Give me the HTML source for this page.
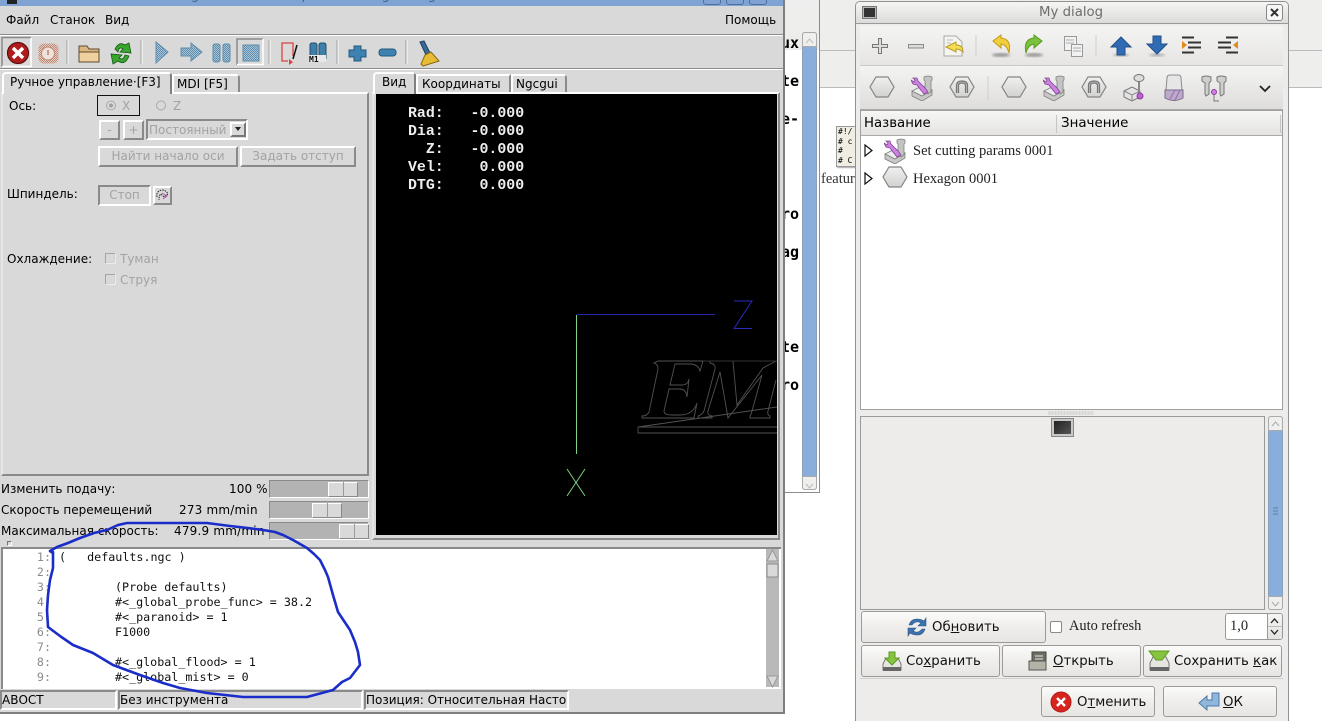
<!DOCTYPE html>
<html><head><meta charset="utf-8"><style>
html,body{margin:0;padding:0}
body{width:1322px;height:721px;overflow:hidden;position:relative;background:#fff;font-family:"DejaVu Sans","Liberation Sans",sans-serif;font-size:12px;color:#000}
div,span.t,a{position:absolute;box-sizing:border-box}
.t{position:absolute;white-space:pre;line-height:14px}
.dis{color:#a3a3a3}
.bv{background:#d9d9d9;border:2px solid;border-color:#fff #8a8a8a #8a8a8a #fff}
.sn{background:#d9d9d9;border:2px solid;border-color:#8a8a8a #fff #fff #8a8a8a}
.qb{background:linear-gradient(#fbfbfa,#f0efed 45%,#e6e5e2);border:1px solid #9b9a97;border-radius:3px;font-size:13.3px;color:#111}
.qb span{position:absolute;white-space:pre;line-height:16px}
.sl{background:#b3b3b3;border:1px solid;border-color:#8a8a8a #fff #fff #8a8a8a;height:18px}
.th{position:absolute;top:1px;height:15px;background:#d9d9d9;border:1px solid;border-color:#fff #888 #888 #fff}
.ln{position:absolute;left:0;width:51px;text-align:right;font:11.7px/15px "DejaVu Sans Mono",monospace;color:#8c8c8c}
.cd{position:absolute;white-space:pre;font:11.7px/15px "DejaVu Sans Mono",monospace;color:#111}
.ro{position:absolute;left:408px;white-space:pre;font:bold 14.9px/18px "Liberation Mono",monospace;color:#eee}
.st{position:absolute;top:690px;height:20px;background:#d9d9d9;border:2px solid;border-color:#8a8a8a #fff #fff #8a8a8a;white-space:pre;line-height:17px;padding-left:0;overflow:hidden}
.bg{position:absolute;white-space:pre;font:bold 15px/16px 'DejaVu Sans Mono',monospace}
u{text-underline-offset:1px}
</style></head><body>

<svg width="0" height="0" style="position:absolute"><defs>
<linearGradient id="hx" x1="0" y1="0" x2="0" y2="1"><stop offset="0" stop-color="#f0f0ef"/><stop offset="1" stop-color="#d2d2d0"/></linearGradient>
<pattern id="stb" width="2" height="2" patternUnits="userSpaceOnUse"><rect width="2" height="2" fill="#a9c5d8"/><rect width="1" height="1" fill="#5d8cae"/><rect x="1" y="1" width="1" height="1" fill="#5d8cae"/></pattern>
<pattern id="str" width="2" height="2" patternUnits="userSpaceOnUse"><rect width="2" height="2" fill="#e4cfc6"/><rect width="1" height="1" fill="#c08872"/><rect x="1" y="1" width="1" height="1" fill="#c08872"/></pattern>
<symbol id="hex" viewBox="0 0 26 22"><path d="M7 1H19L25 11 19 21H7L1 11Z" fill="url(#hx)" stroke="#858585" stroke-width="1.200"/></symbol>
<symbol id="hexn" viewBox="0 0 26 22"><path d="M7 1H19L25 11 19 21H7L1 11Z" fill="url(#hx)" stroke="#858585" stroke-width="1.200"/><path d="M8.500 17V9.500Q8.500 6 13 6T17.500 9.500V17" fill="none" stroke="#777" stroke-width="3.200"/><path d="M8.500 17V9.500Q8.500 6 13 6T17.500 9.500V17" fill="none" stroke="#bdbdbd" stroke-width=".8"/></symbol>
<symbol id="cut" viewBox="0 0 22 26">
<path d="M1 16L11 21 21 15V20L11 26 1 21Z" fill="#c8c8c8" stroke="#808080" stroke-width=".8"/><path d="M1 16L11 11 21 15 11 21Z" fill="#ececec" stroke="#808080" stroke-width=".8"/>
<path d="M13 2Q17 0 21 2V5L20 6V17L17 19 14 17V6L13 5Z" fill="#c4c4c4" stroke="#808080" stroke-width=".8"/>
<path d="M2 3L6 3 7 6 14 13 17 17 13 19 9 14 6 10 2 9 0 5 3 7 4 5Z" fill="#d07fe4" stroke="#7d4a8d" stroke-width=".8"/></symbol>
<symbol id="doc" viewBox="0 0 22 22"><path d="M2 1H14L20 7V21H2Z" fill="#f4f4f0" stroke="#aaa"/><path d="M5 5H11M5 8H9" stroke="#bbb"/><path d="M21 17Q21 10 14 10V7L4 12 14 17V14Q18 14 21 17Z" fill="#f4dc55" stroke="#b89a20"/></symbol>
<filter id="bl"><feGaussianBlur stdDeviation="1.200"/></filter>
</defs></svg>

<!-- background windows -->
<div style="left:785px;top:0;width:35px;height:493px;background:#fff;border-right:1px solid #8c8c8c;border-bottom:1px solid #8c8c8c"></div>
<div style="left:785px;top:0;width:34px;height:50px;background:linear-gradient(#eee,#ededeb)"></div>
<div style="left:802px;top:32px;width:15px;height:458px;background:#89aedb;border:1px solid #8aa0bd;border-radius:3px"></div>
<div style="left:802px;top:32px;width:15px;height:15px;background:#efefee;border:1px solid #aaa;border-radius:3px 3px 0 0"></div>
<div style="left:802px;top:476px;width:15px;height:14px;background:#efefee;border:1px solid #aaa;border-radius:0 0 3px 3px"></div>
<svg style="position:absolute;left:802px;top:32px" width="15" height="460"><path d="M4 11L7.500 7 11 11M4 452L7.500 456 11 452" fill="none" stroke="#bbb"/></svg>
<span class="bg" style="left:781px;top:35px">ux</span>
<span class="bg" style="left:781px;top:73px">te</span>
<span class="bg" style="left:781px;top:111px">e-</span>
<span class="bg" style="left:781px;top:206px">ro</span>
<span class="bg" style="left:781px;top:244px">ag</span>
<span class="bg" style="left:781px;top:339px">te</span>
<span class="bg" style="left:781px;top:377px">ro</span>
<div style="left:820px;top:0;width:502px;height:88px;background:#eeeeec;border-bottom:1px solid #bbb"></div>
<div style="left:820px;top:50px;width:502px;height:1px;background:#bbb"></div>
<div style="left:836px;top:126px;width:24px;height:41px;background:#f0eee2;border:1px solid #999;box-shadow:1px 1px 1px #aaa;overflow:hidden;font:8px/9.500px 'DejaVu Sans Mono',monospace;padding-left:1px;white-space:pre">#!/
# c
#
# C</div>
<span class="t" style="left:821px;top:171px;font:14.500px/16px 'Liberation Serif',serif;color:#333">featur</span>

<!-- left window -->
<div style="left:0;top:0;width:785px;height:714px;background:#d9d9d9;border-right:2px solid #7f7f7f;border-bottom:2px solid #7f7f7f"></div>
<div style="left:0;top:0;width:783px;height:6px;background:#7fa3d3;overflow:hidden">
<span class="t" style="left:125px;top:-11px;font-size:13px;color:#44648f;letter-spacing:.4px">featurecnge - Axis 2.5.0~pre - Probe gcode generator - Hu NCGUI - 1.1</span>
<div style="left:703px;top:-8px;width:18px;height:13px;border:1px solid #4f6f9c;border-radius:3px"></div>
<div style="left:726px;top:-8px;width:18px;height:13px;border:1px solid #4f6f9c;border-radius:3px"></div>
<div style="left:749px;top:-8px;width:18px;height:13px;border:1px solid #4f6f9c;border-radius:3px"></div>
<div style="left:7px;top:0;width:10px;height:4px;background:#222"></div>
</div>
<span class="t" style="left:6px;top:13px">Файл</span>
<span class="t" style="left:50px;top:13px">Станок</span>
<span class="t" style="left:105px;top:13px">Вид</span>
<span class="t" style="left:725px;top:13px">Помощь</span>
<div style="left:0;top:34px;width:783px;height:2px;background:#8c8c8c;border-bottom:1px solid #fff"></div>
<div style="left:0;top:68px;width:783px;height:2px;background:#8c8c8c;border-bottom:1px solid #fff"></div>

<!-- toolbar -->
<svg style="position:absolute;left:0;top:36px" width="460" height="33" viewBox="0 36 460 33">
<path d="M2 67V37.500H31" fill="none" stroke="#8a8a8a" stroke-width="1.500"/><path d="M2 66.500H31V38" fill="none" stroke="#fff" stroke-width="1.500"/>
<path d="M237 65V39H263" fill="none" stroke="#8a8a8a" stroke-width="1.500"/><path d="M237 64.500H263V39" fill="none" stroke="#fff" stroke-width="1.500"/>
<path d="M67 40V64M141 40V64M269 40V64M337 40V64M406 40V64" stroke="#9c9c9c" stroke-width="1"/><path d="M68 40V64M142 40V64M270 40V64M338 40V64M407 40V64" stroke="#fff" stroke-width="1"/>
<circle cx="18" cy="53" r="10.500" fill="#b01c1c" stroke="#5e0e0e" stroke-width="1.200"/><path d="M13 48L23 58M23 48L13 58" stroke="#fff" stroke-width="3.400"/>
<rect x="38.500" y="43.500" width="20" height="20" rx="5" fill="url(#str)"/><circle cx="48" cy="53.500" r="6.500" fill="#efe2dc" stroke="#bb8a78"/><path d="M48 50V55" stroke="#b98472" stroke-width="1.500"/>
<path d="M79 46H87L89 49H99V62H79Z" fill="#dcb67e" stroke="#5c4a2e"/><path d="M79 52H99V62H79Z" fill="#efd09e" stroke="#5c4a2e"/>
<path d="M115 49Q119 41 125 45L129 43 131 53 120 52 123 49Q119 46 118 52Z" fill="#3aa52e" stroke="#155a15" stroke-width=".8"/><path d="M129 56Q125 66 118 61L113 64 111 54 122 55 119 58Q123 61 125 55Z" fill="#3aa52e" stroke="#155a15" stroke-width=".8"/>
<path d="M156 42L168 52 156 63Z" fill="url(#stb)" stroke="#5f8dac"/>
<path d="M181 48H191V43L202 52 191 61V56H181Z" fill="url(#stb)" stroke="#5f8dac"/>
<rect x="213" y="44" width="7" height="18" rx="2" fill="url(#stb)" stroke="#5f8dac"/><rect x="223" y="44" width="7" height="18" rx="2" fill="url(#stb)" stroke="#5f8dac"/>
<rect x="243" y="45" width="16" height="16" fill="url(#stb)" stroke="#5f8dac"/>
<path d="M288 61H282V43H293V56" fill="none" stroke="#e04040" stroke-width="1.300"/><path d="M285 62H289V59L293 62 289 65V62" fill="#e04040"/><path d="M293 59L297 45" stroke="#111" stroke-width="1.500"/>
<rect x="310" y="43" width="7" height="17" rx="2" fill="#3e7fa8" stroke="#1e4f70"/><rect x="319" y="43" width="7" height="17" rx="2" fill="#3e7fa8" stroke="#1e4f70"/>
<rect x="309" y="55" width="17" height="7" fill="#e8e8e8"/>
<path d="M354 46H361V50H366V57H361V61H354V57H349V50H354Z" fill="#3e82b2" stroke="#215a80"/>
<rect x="379" y="49" width="17" height="7" rx="3" fill="#3e82b2" stroke="#215a80"/>
<path d="M420 42L424 41 430 53 426 55Z" fill="#3a6a9a" stroke="#1e3e60"/><path d="M425 55L431 52 439 61 423 66 421 64Z" fill="#e8bb35" stroke="#8a6a10"/>
</svg>
<span class="t" style="left:309px;top:56px;font:bold 8px/8px 'DejaVu Sans Mono',monospace;color:#111">M1</span>

<!-- tabs -->
<div style="left:1px;top:92px;width:368px;height:384px;background:#d9d9d9;border:2px solid;border-color:#fff #8a8a8a #8a8a8a #e6e6e6"></div>
<div style="left:2px;top:72px;width:170px;height:22px;background:#d9d9d9;border:2px solid;border-color:#fff #7f7f7f transparent #fff;border-bottom:0;border-radius:4px 4px 0 0"></div>
<div style="left:172px;top:74px;width:68px;height:18px;background:#d9d9d9;border:2px solid;border-color:#fff #8a8a8a transparent #fff;border-bottom:0;border-radius:0 4px 0 0"></div>
<span class="t" style="left:10px;top:75px">Ручное управление·[F3]</span>
<span class="t" style="left:177px;top:77px">MDI [F5]</span>

<span class="t" style="left:9px;top:99px">Ось:</span>
<div style="left:97px;top:95px;width:43px;height:21px;border:1px solid #111"></div>
<svg style="position:absolute;left:104px;top:99px" width="70" height="14"><circle cx="7" cy="6.500" r="4.500" fill="none" stroke="#a9a9a9"/><circle cx="7" cy="6.500" r="2" fill="#a0a0a0"/><circle cx="57" cy="6.500" r="4.500" fill="none" stroke="#a9a9a9"/></svg>
<span class="t dis" style="left:122px;top:99px">X</span>
<span class="t dis" style="left:173px;top:99px">Z</span>

<div class="bv dis" style="left:99px;top:120px;width:21px;height:20px;text-align:center;line-height:16px">-</div>
<div class="bv dis" style="left:123px;top:120px;width:21px;height:20px;text-align:center;line-height:16px">+</div>
<div class="sn" style="left:146px;top:119px;width:102px;height:21px"></div>
<span class="t dis" style="left:149px;top:123px">Постоянный</span>
<div class="bv" style="left:230px;top:122px;width:16px;height:15px;border-color:#fff #777 #777 #fff"></div>
<svg style="position:absolute;left:234px;top:126px" width="9" height="7"><path d="M1 1H7L4 5Z" fill="#222"/></svg>
<div class="bv dis" style="left:98px;top:146px;width:140px;height:21px;text-align:center;line-height:17px">Найти начало оси</div>
<div class="bv dis" style="left:240px;top:146px;width:116px;height:21px;text-align:center;line-height:17px">Задать отступ</div>

<span class="t" style="left:7px;top:187px">Шпиндель:</span>
<div class="sn dis" style="left:98px;top:185px;width:53px;height:21px;text-align:center;line-height:17px">Стоп</div>
<div class="bv" style="left:153px;top:186px;width:19px;height:19px"></div>
<svg style="position:absolute;left:155px;top:188px" width="15" height="15"><path d="M2 9Q1 3 7 2 11 2 13 6L9 9 6 6Q4 7 4 12" fill="none" stroke="#222" stroke-dasharray="1.500 1"/><path d="M7 5L12 8 8 11" fill="none" stroke="#b05ab0"/></svg>

<span class="t" style="left:7px;top:252px">Охлаждение:</span>
<svg style="position:absolute;left:104px;top:252px" width="14" height="36"><rect x="1.500" y="1.500" width="9" height="9" fill="none" stroke="#a5a5a5"/><rect x="1.500" y="22.500" width="9" height="9" fill="none" stroke="#a5a5a5"/><path d="M11 2V11H2M11 23V32H2" fill="none" stroke="#fff"/></svg>
<span class="t dis" style="left:120px;top:252px">Туман</span>
<span class="t dis" style="left:120px;top:273px">Струя</span>

<span class="t" style="left:1px;top:482px">Изменить подачу:</span>
<span class="t" style="left:229px;top:482px;letter-spacing:.1px">100 %</span>
<div class="sl" style="left:269px;top:480px;width:100px"><div class="th" style="left:58px;width:30px"></div><div style="left:73px;top:1px;width:1px;height:15px;background:#999"></div></div>
<span class="t" style="left:1px;top:503px">Скорость перемещений</span>
<span class="t" style="left:179px;top:503px;letter-spacing:.2px">273 mm/min</span>
<div class="sl" style="left:269px;top:501px;width:100px"><div class="th" style="left:42px;width:30px"></div><div style="left:57px;top:1px;width:1px;height:15px;background:#999"></div></div>
<span class="t" style="left:1px;top:524px">Максимальная скорость:</span>
<span class="t" style="left:174px;top:524px;letter-spacing:.2px">479.9 mm/min</span>
<div class="sl" style="left:269px;top:522px;width:100px"><div class="th" style="left:69px;width:30px"></div><div style="left:84px;top:1px;width:1px;height:15px;background:#999"></div></div>
<div style="left:7px;top:541px;width:5px;height:5px;background:#d9d9d9;border:1px solid #777;border-color:#777 #fff #fff #777"></div>

<!-- preview -->
<div style="left:372px;top:92px;width:408px;height:448px;background:#d9d9d9;border:2px solid;border-color:#fff #8a8a8a #8a8a8a #e6e6e6"></div>
<div style="left:373px;top:72px;width:43px;height:22px;background:#d9d9d9;border:2px solid;border-color:#fff #7f7f7f transparent #fff;border-bottom:0;border-radius:4px 4px 0 0"></div>
<div style="left:416px;top:74px;width:95px;height:18px;border:2px solid;border-color:#fff #8a8a8a transparent #fff;border-bottom:0"></div>
<div style="left:511px;top:74px;width:56px;height:18px;border:2px solid;border-color:#fff #8a8a8a transparent #fff;border-bottom:0;border-radius:0 4px 0 0"></div>
<span class="t" style="left:382px;top:75px">Вид</span>
<span class="t" style="left:422px;top:77px">Координаты</span>
<span class="t" style="left:516px;top:77px">Ngcgui</span>
<div style="left:376px;top:94px;width:401px;height:441px;background:#000"></div>
<span class="ro" style="top:104.500px">Rad:   -0.000</span>
<span class="ro" style="top:122.500px">Dia:   -0.000</span>
<span class="ro" style="top:140.500px">  Z:   -0.000</span>
<span class="ro" style="top:158.500px">Vel:    0.000</span>
<span class="ro" style="top:176.500px">DTG:    0.000</span>
<svg style="position:absolute;left:376px;top:94px" width="401" height="441" viewBox="376 94 401 441">
<path d="M576.500 314.500H715" fill="none" stroke="#2424a8"/>
<path d="M734 301H752L734 328.500H752" fill="none" stroke="#2a2abf"/>
<path d="M576.500 315V454M567 469L585 496M585 469L567 496" fill="none" stroke="#7fd07f"/>
<g fill="none" stroke="#525252" stroke-width=".9">
<path d="M658 361H703L700 371Q698 364 690 364H675L670 385H682Q688 385 689 379L687 397Q686 389 680 389H669L664 411Q664 415 672 415H680Q693 415 697 403L694 418H642V416Q647 416 649 412L658 369Q658 364 654 363Z"/>
<path d="M698 418V416Q702 415 704 411L715 369Q716 364 710 363V361H733L737 405 763 368 776 361"/>
<path d="M698 418H712V416Q707 415 708 411L720 372 728 418 762 375 752 411Q751 415 750 416V418H770V416Q767 415 768 411L776 380"/>
<path d="M703 361H777" stroke="#333"/>
<path d="M638 427L777 407M638 427H777M638 427V433H777"/>
</g></svg>

<!-- code -->
<div style="left:1px;top:547px;width:780px;height:142px;background:#fff;border-left:2px solid #8a8a8a;border-top:2px solid #8a8a8a"></div>
<div style="left:766px;top:549px;width:13px;height:138px;background:#b9b9b9"></div>
<svg style="position:absolute;left:766px;top:549px" width="14" height="140"><path d="M1 12L6.500 1 12 12Z" fill="#d9d9d9" stroke="#999"/><rect x="1" y="15" width="11" height="13" fill="#d9d9d9" stroke="#8a8a8a"/><path d="M1 127L6.500 138 12 127Z" fill="#d9d9d9" stroke="#999"/></svg>
<div class="ln" style="top:550px">1:</div><div class="ln" style="top:565px">2:</div><div class="ln" style="top:580px">3:</div><div class="ln" style="top:595px">4:</div><div class="ln" style="top:610px">5:</div><div class="ln" style="top:625px">6:</div><div class="ln" style="top:640px">7:</div><div class="ln" style="top:655px">8:</div><div class="ln" style="top:670px">9:</div>
<span class="cd" style="left:59px;top:550px">(   defaults.ngc )</span>
<span class="cd" style="left:115px;top:580px">(Probe defaults)</span>
<span class="cd" style="left:115px;top:595px">#&lt;_global_probe_func&gt; = 38.2</span>
<span class="cd" style="left:115px;top:610px">#&lt;_paranoid&gt; = 1</span>
<span class="cd" style="left:115px;top:625px">F1000</span>
<span class="cd" style="left:115px;top:655px">#&lt;_global_flood&gt; = 1</span>
<span class="cd" style="left:115px;top:670px">#&lt;_global_mist&gt; = 0</span>

<!-- status -->
<div class="st" style="left:0;width:117px">АВОСТ</div>
<div class="st" style="left:118px;width:245px">Без инструмента</div>
<div class="st" style="left:364px;width:205px">Позиция: Относительная Настоя</div>

<!-- scribble -->
<svg style="position:absolute;left:0;top:0;pointer-events:none" width="784" height="721"><path d="M53 553L50 551 57 547 68 543 80 538 94 533 107 530 118 525 127 523 165 523 207 523 230 526 248 528 263 530 275 532 283 535 293 540 307 548 314 554 320 560 325 570 328 577 333 595 338 612 344 621 350 630 355 642 358 652 360 665 350 678 342 682 333 690 307 697 243 697 207 693 180 688 163 683 140 675 113 665 93 653 73 645 60 636 48 627 47 610 48 595 50 580 53 568 53 552" fill="none" stroke="#1a2dc8" stroke-width="2.600" stroke-linejoin="round" stroke-linecap="round"/></svg>

<!-- dialog -->
<div style="left:855px;top:1px;width:434px;height:720px;background:#edecea;border:1px solid #8f8f8f;border-bottom:0;border-radius:5px 5px 0 0"></div>
<div style="left:856px;top:2px;width:432px;height:22px;background:linear-gradient(#f5f5f4,#dcdcda);border-bottom:1px solid #9a9a9a;border-radius:4px 4px 0 0"></div>
<span class="t" style="left:1039px;top:5px;font-size:13.300px;line-height:16px;color:#6e6e6e">My dialog</span>
<div style="left:862px;top:6px;width:15px;height:13px;background:#333;border:2px solid #b8b8b8;outline:1px solid #777;outline-offset:-1px"></div>
<div style="left:1266px;top:4px;width:17px;height:17px;background:#f7f7f7;border:1px solid #888;border-radius:3px"></div>
<svg style="position:absolute;left:1266px;top:4px" width="17" height="17"><path d="M5 5L12 12M12 5L5 12" stroke="#333" stroke-width="2"/></svg>
<div style="left:860px;top:26px;width:423px;height:40px;background:linear-gradient(#f4f4f2,#e6e5e3);border-bottom:1px solid #c9c9c7"></div>
<div style="left:860px;top:66px;width:423px;height:44px;background:linear-gradient(#f4f4f2,#dedddb);border-bottom:1px solid #aaa"></div>

<svg style="position:absolute;left:856px;top:26px" width="430" height="84" viewBox="856 26 430 84">
<path d="M878.500 38.500H881.500V44.500H887.500V47.500H881.500V53.500H878.500V47.500H872.500V44.500H878.500Z" fill="#dcdcdc" stroke="#777"/>
<rect x="908.500" y="44.500" width="15" height="3.500" fill="#ddd" stroke="#888"/>
<use href="#doc" x="942" y="35" width="22" height="22"/>
<path d="M976 35V56M1096 35V56" stroke="#cfcfcf"/>
<ellipse cx="1001" cy="55" rx="9" ry="2" fill="#999" filter="url(#bl)"/><ellipse cx="1034" cy="55" rx="9" ry="2" fill="#999" filter="url(#bl)"/>
<path d="M993 41L1001 35V38Q1012 39 1009 53 1007 45 1001 44V48Z" fill="#f0cf3c" stroke="#c09a18"/>
<path d="M1042 41L1034 35V38Q1023 39 1026 53 1028 45 1034 44V48Z" fill="#7ac23c" stroke="#569a20"/>
<rect x="1064.500" y="36.500" width="12" height="14" fill="#f2f2f2" stroke="#999"/><rect x="1071.500" y="44.500" width="11" height="12" fill="#f2f2f2" stroke="#999"/>
<path d="M1066 40H1074M1066 43H1074M1073 48H1081M1073 51H1081" stroke="#aaa"/>
<ellipse cx="1121" cy="55" rx="8" ry="1.500" fill="#aaa" filter="url(#bl)"/><ellipse cx="1157" cy="55" rx="8" ry="1.500" fill="#aaa" filter="url(#bl)"/>
<path d="M1121 37L1131 47H1125V55H1117V47H1111Z" fill="#2f6cb4" stroke="#224f88"/>
<path d="M1157 54L1147 44H1153V36H1161V44H1167Z" fill="#2f6cb4" stroke="#224f88"/>
<path d="M1182 37.500H1194M1188 42.500H1201M1188 47.500H1201M1182 52.500H1194" stroke="#333" stroke-width="2"/><path d="M1182 41V49L1187 45Z" fill="#e08a20"/>
<path d="M1226 37.500H1238M1218 42.500H1231M1218 47.500H1231M1226 52.500H1238" stroke="#333" stroke-width="2"/><path d="M1238 41V49L1233 45Z" fill="#e08a20"/>
<path d="M988 76V100" stroke="#cfcfcf"/>
<use href="#hex" x="869" y="76" width="26" height="22"/>
<use href="#cut" x="911" y="75" width="22" height="26"/>
<use href="#hexn" x="949" y="76" width="26" height="22"/>
<use href="#hex" x="1001" y="76" width="26" height="22"/>
<use href="#cut" x="1043" y="75" width="22" height="26"/>
<use href="#hexn" x="1081" y="76" width="26" height="22"/>
<path d="M1124 91L1132 87 1140 91V97L1132 101 1124 97Z" fill="#e4e4e4" stroke="#777"/><path d="M1124 91L1132 95 1140 91M1132 95V101" fill="none" stroke="#888"/><path d="M1139 81V95" stroke="#888" stroke-width="2"/><ellipse cx="1139" cy="78" rx="5" ry="3.500" fill="#ddd" stroke="#777"/><circle cx="1140" cy="96" r="3" fill="#c060d8" stroke="#8a3a9a"/>
<path d="M1167 78Q1167 75 1170 75H1178Q1181 75 1181 78L1182 90H1166Z" fill="#e6e6e6" stroke="#8a8a8a"/><path d="M1165 90H1183V98Q1174 103 1165 98Z" fill="#bcaac9" stroke="#7a6a8a"/><path d="M1170 99L1175 90M1175 100L1180 90" stroke="#9a6ab5"/>
<path d="M1202 77Q1206 75 1211 77V81L1209 83V94L1206 96 1205 94V83L1202 81ZM1217 77Q1221 75 1226 77V81L1224 83V94L1221 96 1220 94V83L1217 81Z" fill="#cfcfcf" stroke="#777"/><path d="M1214 95V101H1219" fill="none" stroke="#777"/><circle cx="1214" cy="92" r="2.500" fill="#d080e0" stroke="#8a3a9a"/>
<path d="M1260 86L1265 91 1270 86" fill="none" stroke="#222" stroke-width="1.800"/>
</svg>

<!-- tree -->
<div style="left:860px;top:110px;width:423px;height:300px;background:#fff;border:1px solid #9f9f9d"></div>
<div style="left:861px;top:111px;width:421px;height:25px;background:linear-gradient(#f6f6f5,#e4e3e1);border-bottom:1px solid #aaa"></div>
<div style="left:1056px;top:115px;width:1px;height:18px;background:#c5c5c3"></div>
<div style="left:1280px;top:115px;width:1px;height:18px;background:#c5c5c3"></div>
<span class="t" style="left:864px;top:116px;font-size:13.300px;line-height:16px">Название</span>
<span class="t" style="left:1061px;top:116px;font-size:13.400px;line-height:16px">Значение</span>
<svg style="position:absolute;left:860px;top:136px" width="60" height="60"><path d="M5 9L12 14.500 5 20ZM5 37L12 42.500 5 48Z" fill="#fff" stroke="#111" stroke-width="1.200"/><use href="#cut" x="24" y="2" width="22" height="26"/><use href="#hex" x="22" y="30" width="26" height="22"/></svg>
<span class="t" style="left:913px;top:143px;font:14.500px/17px 'Liberation Serif',serif;color:#222">Set cutting params 0001</span>
<span class="t" style="left:913px;top:171px;font:14.500px/17px 'Liberation Serif',serif;color:#222">Hexagon 0001</span>
<div style="left:1048px;top:411px;width:46px;height:4px;background-image:radial-gradient(#bbb 40%,transparent 45%);background-size:3px 2px"></div>

<!-- lower panel -->
<div style="left:860px;top:416px;width:405px;height:194px;background:#edecea;border:1px solid #9a9a98"></div>
<div style="left:1052px;top:419px;width:21px;height:17px;background:linear-gradient(135deg,#222,#555);border:2px solid #c8c8c8;outline:1px solid #888"></div>
<div style="left:1268px;top:416px;width:15px;height:194px;background:#89aedb;border:1px solid #8aa0bd;border-radius:3px"></div>
<div style="left:1268px;top:416px;width:15px;height:15px;background:#efefee;border:1px solid #aaa;border-radius:3px 3px 0 0"></div>
<div style="left:1268px;top:596px;width:15px;height:14px;background:#efefee;border:1px solid #aaa;border-radius:0 0 3px 3px"></div>
<svg style="position:absolute;left:1268px;top:416px" width="15" height="194"><path d="M4 10L7.500 6 11 10M4 186L7.500 190 11 186" fill="none" stroke="#aaa"/><path d="M5 92H10M5 95H10M5 98H10" stroke="#5a7ea8"/></svg>

<div class="qb" style="left:861px;top:611px;width:185px;height:32px"><span style="left:70px;top:8px">Об<u>н</u>овить</span></div>
<svg style="position:absolute;left:907px;top:617px" width="20" height="20"><path d="M2 8Q4 2 10 2 14 2 17 4L19 1V9H11L14 6Q9 3 5 8Z" fill="#3b73ad" stroke="#2a5585" stroke-width=".6"/><path d="M18 12Q16 18 10 18 6 18 3 16L1 19V11H9L6 14Q11 17 15 12Z" fill="#3b73ad" stroke="#2a5585" stroke-width=".6"/></svg>
<div style="left:1050px;top:621px;width:12px;height:12px;background:#fff;border:1px solid #888;border-radius:2px"></div>
<span class="t" style="left:1069px;top:618px;font:14.400px/17px 'Liberation Serif',serif;color:#222">Auto refresh</span>
<div style="left:1225px;top:613px;width:58px;height:27px;background:#fff;border:1px solid #999;border-radius:3px"></div>
<span class="t" style="left:1230px;top:618px;font:14.500px/17px 'Liberation Serif',serif;color:#222">1,0</span>
<div style="left:1267px;top:614px;width:15px;height:25px;background:linear-gradient(#f5f5f4,#e2e2e0);border-left:1px solid #999;border-radius:0 3px 3px 0"></div>
<svg style="position:absolute;left:1267px;top:614px" width="15" height="25"><path d="M4 9L7.500 5 11 9M4 16L7.500 20 11 16" fill="none" stroke="#222" stroke-width="1.300"/><path d="M1 12.500H15" stroke="#bbb"/></svg>

<div class="qb" style="left:861px;top:645px;width:139px;height:32px"><span style="left:44px;top:8px">Со<u>х</u>ранить</span></div>
<svg style="position:absolute;left:881px;top:650px" width="22" height="22"><path d="M2 14L5 8H17L20 14V20H2Z" fill="#e6e6e0" stroke="#777"/><rect x="2" y="17" width="18" height="4" fill="#666"/><path d="M8 2H14V8H18L11 15 4 8H8Z" fill="#86c440" stroke="#5a9a20"/></svg>
<div class="qb" style="left:1002px;top:645px;width:139px;height:32px"><span style="left:50px;top:8px"><u>О</u>ткрыть</span></div>
<svg style="position:absolute;left:1027px;top:650px" width="22" height="22"><path d="M5 2H19V18H5Z" fill="#6e6e64" stroke="#444"/><path d="M8 6H16M8 9H16" stroke="#eee"/><path d="M2 11H19V20H2Z" fill="#b3b3a5" stroke="#555"/></svg>
<div class="qb" style="left:1143px;top:645px;width:139px;height:32px"><span style="left:30px;top:8px">Сохранить <u>к</u>ак</span></div>
<svg style="position:absolute;left:1148px;top:649px" width="24" height="24"><path d="M2 14L5 8H18L21 14V21H2Z" fill="#e6e6e0" stroke="#777"/><rect x="2" y="18" width="19" height="4" fill="#666"/><path d="M1 2H21L14 11H8Z" fill="#86c440" stroke="#5a9a20"/></svg>
<div style="left:860px;top:678px;width:423px;height:1px;background:#d0d0ce"></div>
<div class="qb" style="left:1041px;top:686px;width:114px;height:31px"><span style="left:35px;top:8px">О<u>т</u>менить</span></div>
<svg style="position:absolute;left:1049px;top:690px" width="24" height="24"><circle cx="12" cy="12" r="10" fill="#d8241e" stroke="#b01a18"/><path d="M8 8L16 16M16 8L8 16" stroke="#fff" stroke-width="2.500"/></svg>
<div class="qb" style="left:1163px;top:686px;width:114px;height:31px"><span style="left:59px;top:8px"><u>О</u>К</span></div>
<svg style="position:absolute;left:1198px;top:691px" width="22" height="20"><path d="M1 12L9 5V9H14V2H21V15H9V19Z" fill="#8fb6db" stroke="#4e7ba8"/></svg>
</body></html>
